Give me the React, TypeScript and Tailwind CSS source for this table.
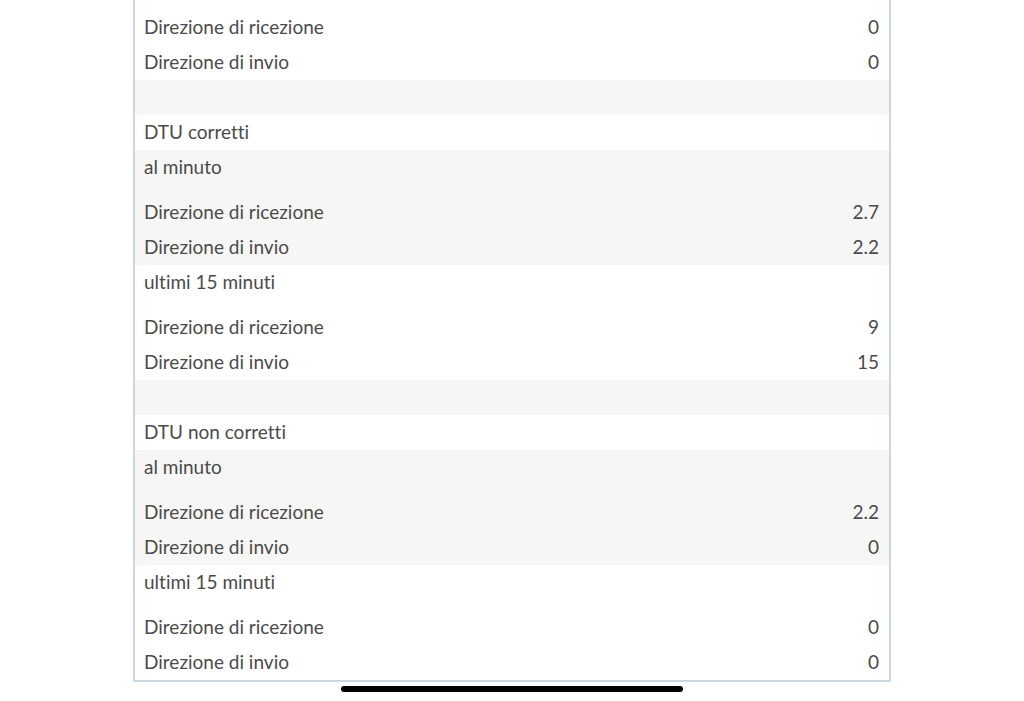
type Item = { label: string; value?: string };

function Row({ label, value }: Item) {
  return (
    <div className="flex h-[35px] items-center justify-between pl-[9px] pr-[10px]">
      <span>{label}</span>
      {value !== undefined && <span>{value}</span>}
    </div>
  );
}

function Period({ title, rx, tx, gray }: { title: string; rx: string; tx: string; gray?: boolean }) {
  return (
    <div className={gray ? "bg-[#f6f6f4]" : "bg-white"}>
      <Row label={title} />
      <div className="pt-[10px]">
        <Row label="Direzione di ricezione" value={rx} />
        <Row label="Direzione di invio" value={tx} />
      </div>
    </div>
  );
}

function Section({ title, data }: { title: string; data: [string, string, string, string] }) {
  return (
    <div>
      <div className="h-[35px] bg-[#f6f6f4]" />
      <Row label={title} />
      <Period title="al minuto" rx={data[0]} tx={data[1]} gray />
      <Period title="ultimi 15 minuti" rx={data[2]} tx={data[3]} />
    </div>
  );
}

export default function App() {
  return (
    <div
      className="flex h-[701px] flex-col items-center overflow-hidden bg-white text-[19px] text-[#4b4b4b] [font-variant-ligatures:none]"
      style={{ fontFamily: "Lato, 'Noto Sans', sans-serif" }}
    >
      <div className="w-[758px] border-x-2 border-b-2 border-[#cbd6df]">
        <div className="h-[10px]" />
        <Row label="Direzione di ricezione" value="0" />
        <Row label="Direzione di invio" value="0" />
        <Section title="DTU corretti" data={["2.7", "2.2", "9", "15"]} />
        <Section title="DTU non corretti" data={["2.2", "0", "0", "0"]} />
      </div>
      <div className="mt-[4px] h-[6px] w-[342px] rounded-full bg-black" />
    </div>
  );
}
